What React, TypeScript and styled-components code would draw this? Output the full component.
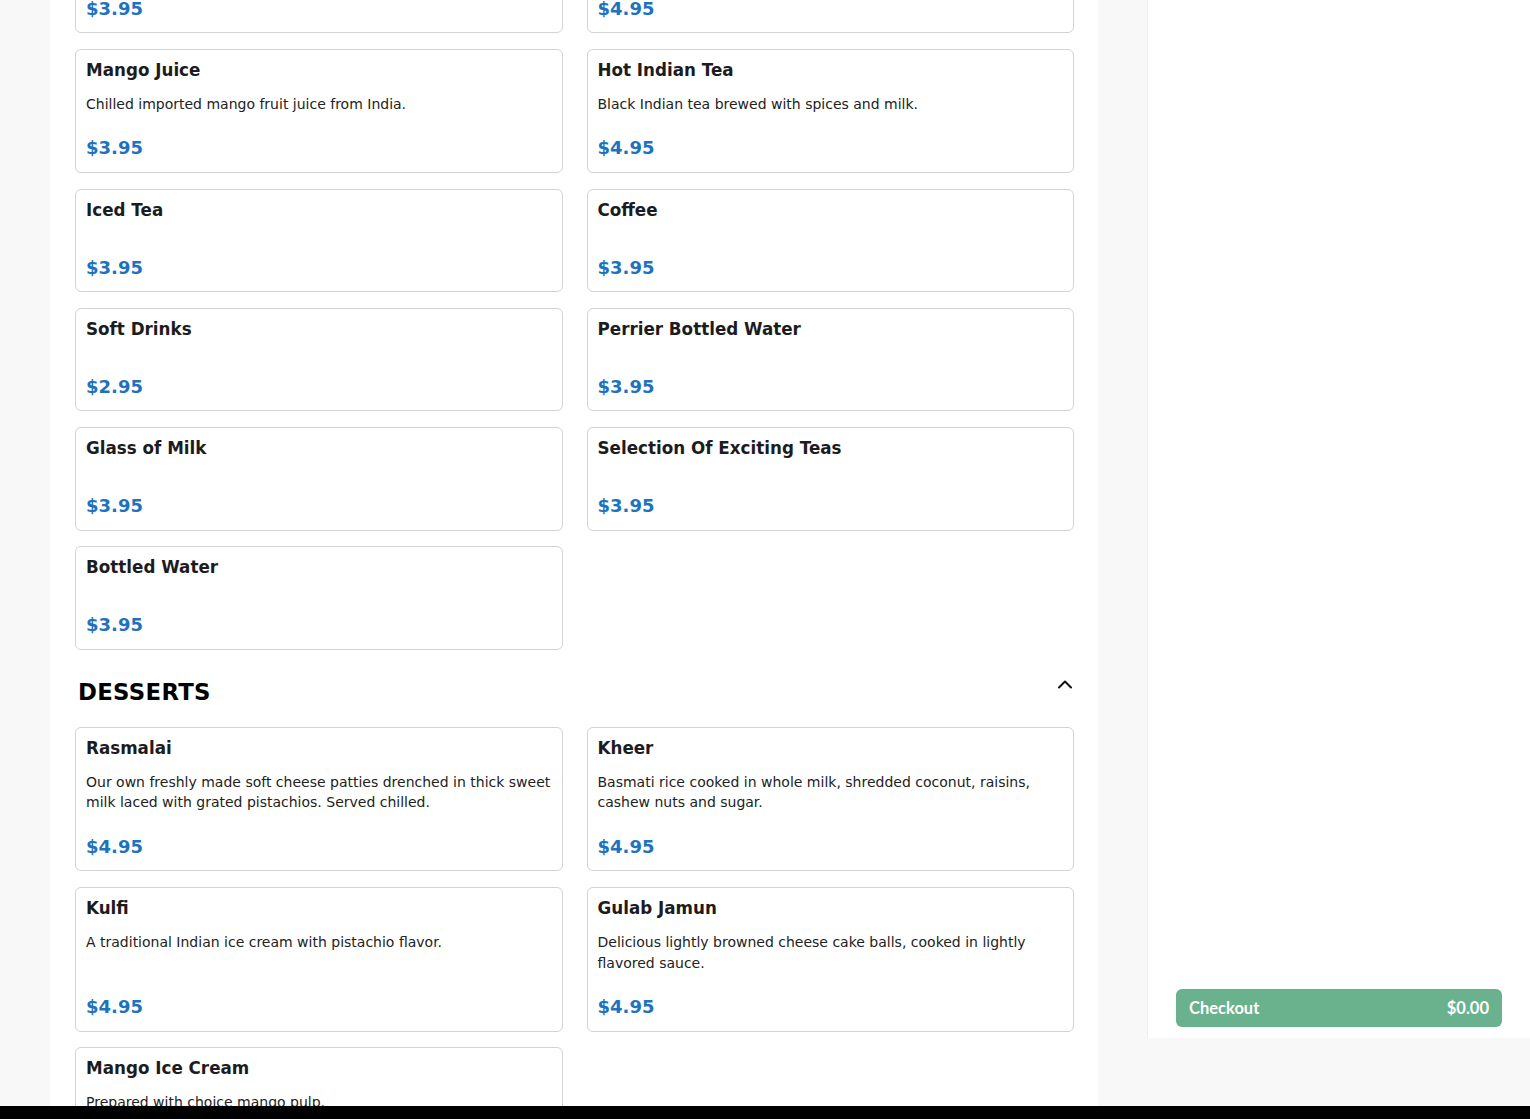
import React from "react";
import styled, { createGlobalStyle } from "styled-components";

const Global = createGlobalStyle`
  html, body { margin: 0; padding: 0; }
  body {
    background: #f8f8f8;
    font-family: "DejaVu Sans", "Liberation Sans", sans-serif;
    overflow: hidden;
  }
`;

type Item = { name: string; desc?: string; price: string };

const drinks: Item[] = [
  { name: "Mango Lassi", desc: "Sweet yogurt drink blended with mango pulp.", price: "$3.95" },
  { name: "Masala Chai", desc: "Indian tea brewed with fragrant spices.", price: "$4.95" },
  { name: "Mango Juice", desc: "Chilled imported mango fruit juice from India.", price: "$3.95" },
  { name: "Hot Indian Tea", desc: "Black Indian tea brewed with spices and milk.", price: "$4.95" },
  { name: "Iced Tea", price: "$3.95" },
  { name: "Coffee", price: "$3.95" },
  { name: "Soft Drinks", price: "$2.95" },
  { name: "Perrier Bottled Water", price: "$3.95" },
  { name: "Glass of Milk", price: "$3.95" },
  { name: "Selection Of Exciting Teas", price: "$3.95" },
  { name: "Bottled Water", price: "$3.95" },
];

const desserts: Item[] = [
  {
    name: "Rasmalai",
    desc: "Our own freshly made soft cheese patties drenched in thick sweet milk laced with grated pistachios. Served chilled.",
    price: "$4.95",
  },
  {
    name: "Kheer",
    desc: "Basmati rice cooked in whole milk, shredded coconut, raisins, cashew nuts and sugar.",
    price: "$4.95",
  },
  { name: "Kulfi", desc: "A traditional Indian ice cream with pistachio flavor.", price: "$4.95" },
  {
    name: "Gulab Jamun",
    desc: "Delicious lightly browned cheese cake balls, cooked in lightly flavored sauce.",
    price: "$4.95",
  },
  { name: "Mango Ice Cream", desc: "Prepared with choice mango pulp.", price: "$4.95" },
];

const Page = styled.div`
  display: flex;
  height: 100vh;
  overflow: hidden;
  background: #f8f8f8;
`;

const Main = styled.main`
  margin-left: 50px;
  width: 1048px;
  flex: none;
  background: #ffffff;
  padding: 0 24px 0 25px;
  box-sizing: border-box;
  overflow: hidden;
`;

const Scrolled = styled.div<{ $offset: number }>`
  margin-top: ${(p) => -p.$offset}px;
`;

const Grid = styled.div`
  display: grid;
  grid-template-columns: 1fr 1fr;
  column-gap: 24px;
  row-gap: 15.75px;
`;

const Card = styled.div`
  display: flex;
  flex-direction: column;
  border: 1px solid #d3d3d3;
  border-radius: 6px;
  padding: 9px 10px 12.5px;
  background: #fff;
`;

const Title = styled.h3`
  margin: 0;
  font-size: 16.75px;
  line-height: 22px;
  font-weight: 700;
  color: #1c1c1e;
`;

const Desc = styled.p`
  margin: 13px 0 23px;
  font-size: 14px;
  line-height: 20.5px;
  color: #222;
`;

const Price = styled.div`
  margin-top: auto;
  font-size: 18px;
  line-height: 22px;
  font-weight: 700;
  color: #1f72be;
`;

const SectionHeader = styled.div`
  display: flex;
  justify-content: space-between;
  align-items: flex-start;
  margin: 30px 0 23px;
  padding: 0 1px 0 3px;
`;

const SectionTitle = styled.h2`
  margin: 0;
  font-size: 22.8px;
  line-height: 24px;
  font-weight: 700;
  color: #000;
  letter-spacing: 0.3px;
`;

const Toggle = styled.button`
  border: 0;
  background: none;
  padding: 0;
  margin-top: -4px;
  width: 16px;
  height: 16px;
  display: flex;
  align-items: center;
  justify-content: center;
  cursor: pointer;
`;

const Aside = styled.aside`
  margin-left: 49px;
  flex: 1;
  height: 1038px;
  background: #ffffff;
  border-left: 1px solid #efefef;
  display: flex;
  flex-direction: column;
  justify-content: flex-end;
  padding: 0 28px 11px 28px;
  box-sizing: border-box;
`;

const Checkout = styled.button`
  display: flex;
  justify-content: space-between;
  align-items: center;
  height: 38px;
  border: 0;
  border-radius: 6px;
  background: #6ab18e;
  color: #fff;
  padding: 0 13px 0 13px;
  font-family: Lato, "Open Sans", sans-serif;
  font-weight: 700;
  font-size: 16.5px;
  cursor: pointer;
`;

const BottomBar = styled.div`
  position: fixed;
  left: 0;
  right: 0;
  bottom: 0;
  height: 13px;
  background: #000;
`;

function MenuCard({ item }: { item: Item }) {
  return (
    <Card>
      <Title>{item.name}</Title>
      <Desc>{item.desc ?? ""}</Desc>
      <Price>{item.price}</Price>
    </Card>
  );
}

export default function App() {
  return (
    <>
      <Global />
      <Page>
        <Main>
          <Scrolled $offset={91}>
            <Grid>
              {drinks.map((d) => (
                <MenuCard key={d.name} item={d} />
              ))}
            </Grid>
            <SectionHeader>
              <SectionTitle>DESSERTS</SectionTitle>
              <Toggle aria-label="Collapse">
                <svg width="16" height="10" viewBox="0 0 16 10" fill="none">
                  <polyline
                    points="2,8.5 8,2.5 14,8.5"
                    stroke="#111"
                    strokeWidth="2"
                    strokeLinecap="round"
                    strokeLinejoin="round"
                  />
                </svg>
              </Toggle>
            </SectionHeader>
            <Grid>
              {desserts.map((d) => (
                <MenuCard key={d.name} item={d} />
              ))}
            </Grid>
          </Scrolled>
        </Main>
        <Aside>
          <Checkout>
            <span>Checkout</span>
            <span>$0.00</span>
          </Checkout>
        </Aside>
      </Page>
      <BottomBar />
    </>
  );
}
